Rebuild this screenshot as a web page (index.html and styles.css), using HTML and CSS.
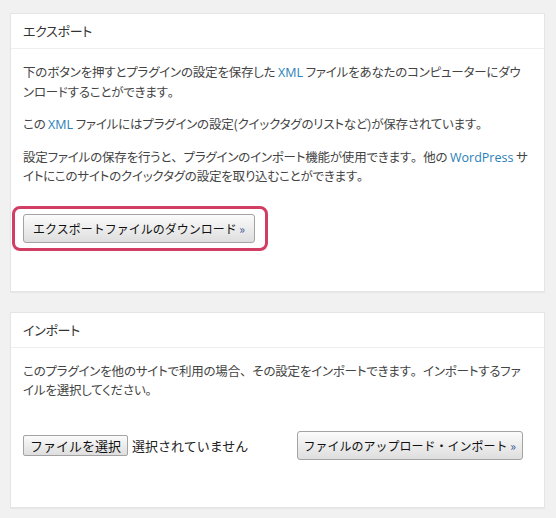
FILE: index.html
```html
<!DOCTYPE html>
<html lang="ja">

<head>
    <meta charset="UTF-8">
    <meta name="viewport" content="width=device-width, initial-scale=1.0">
    <title>エクスポート / インポート</title>
    <link rel="stylesheet" href="styles.css">
</head>

<body>
    <div class="postbox">
        <h3 class="hndle">エクスポート</h3>
        <div class="inside">
            <p>下のボタンを押すとプラグインの設定を保存した <span class="term">XML</span> ファイルをあなたのコンピューターにダウンロードすることができます<span class="punct">。</span></p>
            <p>この <span class="term">XML</span> ファイルにはプラグインの設定(クイックタグのリストなど)が保存されています<span class="punct">。</span></p>
            <p>設定ファイルの保存を行うと<span class="punct">、</span>プラグインのインポート機能が使用できます<span class="punct">。</span>他の <span class="term">WordPress</span> サイトにこのサイトのクイックタグの設定を取り込むことができます<span class="punct">。</span></p>
            <div class="submit">
                <div class="highlight">
                    <button type="button" class="button">エクスポートファイルのダウンロード <span class="raquo">&raquo;</span></button>
                </div>
            </div>
        </div>
    </div>

    <div class="postbox">
        <h3 class="hndle">インポート</h3>
        <div class="inside">
            <p>このプラグインを他のサイトで利用の場合<span class="punct">、</span>その設定をインポートできます<span class="punct">。</span>インポートするファイルを選択してください<span class="punct">。</span></p>
            <div class="import-row">
                <div class="file">
                    <button type="button" class="file-btn">ファイルを選択</button>
                    <span class="file-name">選択されていません</span>
                </div>
                <button type="button" class="button">ファイルのアップロード・インポート <span class="raquo">&raquo;</span></button>
            </div>
        </div>
    </div>
</body>

</html>
```

FILE: styles.css
```css
body {
    margin: 0;
    padding: 13px 11px 0 10px;
    background-color: #f1f1f1;
    font-family: "Noto Sans CJK JP", "Open Sans", sans-serif;
    color: #444;
}

.postbox {
    background-color: #fff;
    border: 1px solid #e5e5e5;
    box-shadow: 0 1px 1px rgba(0, 0, 0, 0.04);
    margin-bottom: 20px;
}

.hndle {
    margin: 0;
    padding: 8px 12px;
    font-size: 13px;
    line-height: 18px;
    letter-spacing: -0.3px;
    font-weight: normal;
    font-feature-settings: "palt";
    color: #333;
    border-bottom: 1px solid #eee;
}

.inside {
    margin: 13px 0 11px;
    padding: 0 12px 12px;
}

.inside p {
    margin: 13px 0;
    padding-right: 2px;
    font-size: 12.5px;
    line-height: 19.5px;
    letter-spacing: -0.2px;
    font-feature-settings: "palt";
}

.inside p:first-child {
    margin-top: 0;
}

/* full-width punctuation, like the original font */
.punct {
    font-feature-settings: normal;
}

.term {
    font-family: "Open Sans", sans-serif;
    letter-spacing: 0;
    line-height: 1;
    color: #2a7fba;
}

.submit {
    margin: 28px 0 25px;
}

.highlight {
    width: fit-content;
    margin: -8px 0 -8px -11px;
    padding: 5px 10px 5px 8px;
    border: 3px solid #d13d63;
    border-radius: 8px;
}

.button,
.file-btn {
    font-family: "Noto Sans CJK JP", sans-serif;
    color: #111;
    background: linear-gradient(#fbfbfb, #dedede);
    border: 1px solid #a3a3a3;
    border-radius: 3px;
    cursor: pointer;
}

.button {
    height: 29px;
    padding: 0 6px;
    font-size: 12px;
}

.highlight .button {
    padding: 0 9px;
}

.raquo {
    color: #3b5998;
}

.import-row {
    display: flex;
    align-items: center;
    justify-content: space-between;
    margin: 31px 9px 24px 0;
}

.file {
    display: flex;
    align-items: center;
    gap: 4px;
}

.file-btn {
    height: 21px;
    padding: 0 6px;
    font-size: 13px;
    border-radius: 2px;
}

.file-name {
    font-size: 13px;
    color: #222;
}
```
